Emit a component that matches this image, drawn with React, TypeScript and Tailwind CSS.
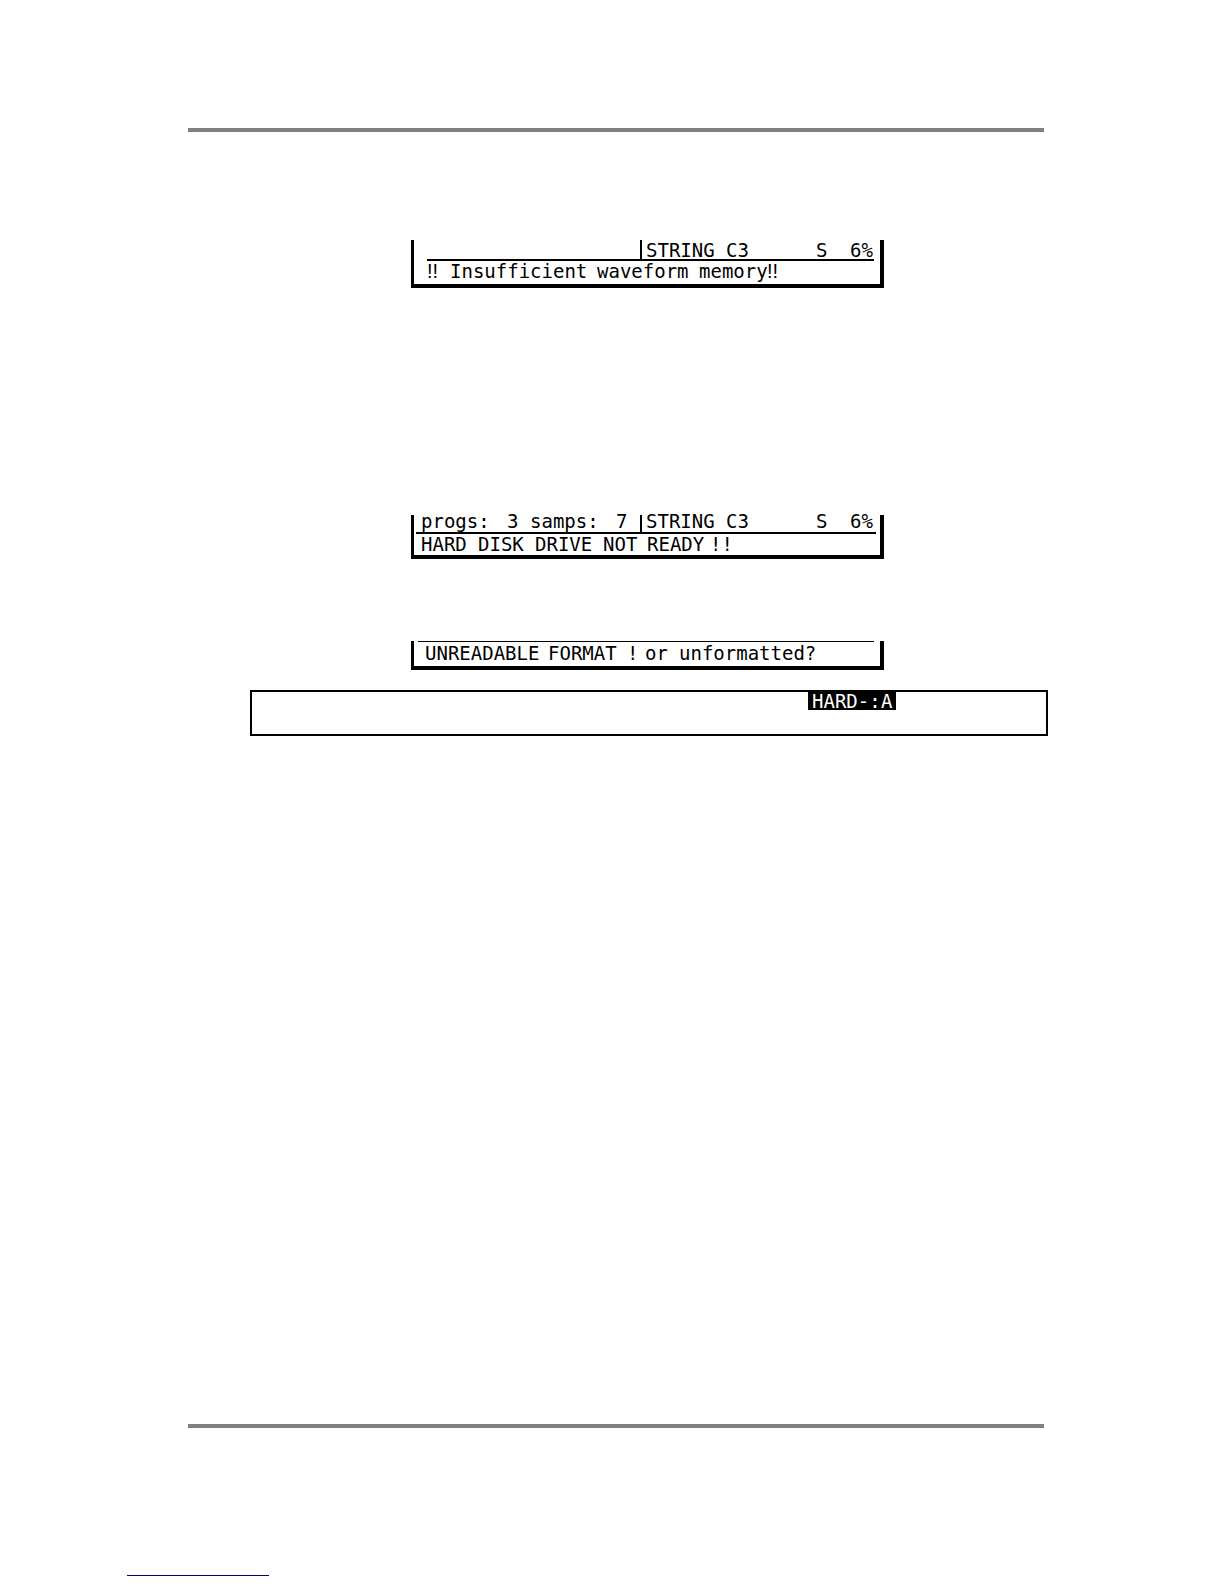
import type { ReactNode } from "react";

const mono = "font-['DejaVu_Sans_Mono',monospace] text-[19px] whitespace-pre";

function Panel({ label, children }: { label: string; children: ReactNode }) {
  return (
    <section
      aria-label={label}
      className={`mx-auto w-[473px] border-b-4 border-l-[3px] border-r-4 border-black ${mono}`}
    >
      {children}
    </section>
  );
}

/* Paired exclamation marks are set tightly on the display. */
function Alert() {
  return <span className="font-['Liberation_Sans',sans-serif] text-[20px]">!!</span>;
}

/* Currently loaded sample and the free memory. */
function SampleStatus() {
  return (
    <div className="flex flex-1 border-l-2 border-black pl-1">
      <span className="w-20">STRING</span>
      <span className="w-[90px]">C3</span>
      <span className="w-[34px]">S</span>
      <span>6%</span>
    </div>
  );
}

export default function App() {
  return (
    <main className="min-h-[1584px] bg-white pl-[188px] pr-[180px] pt-32 text-black">
      <hr className="h-1 border-0 bg-[#808080]" />

      <div className="ml-[63px] pt-[108px]">
        <Panel label="Memory message">
          <div className="flex h-[19px] pl-[226px] leading-5">
            <SampleStatus />
          </div>
          <div className="ml-[13px] mr-[6px] h-0.5 bg-black" />
          <p className="flex h-[23px] pl-[13px] leading-5">
            <span className="w-[23px]"><Alert /></span>
            <span className="w-[147px]">Insufficient</span>
            <span className="w-[102px]">waveform</span>
            <span className="w-[68px]">memory</span>
            <Alert />
          </p>
        </Panel>

        <div className="mt-[227px]">
          <Panel label="Hard disk message">
            <div className="flex h-[17px] pl-[7px] leading-3">
              <span className="w-[86px]">progs:</span>
              <span className="w-[23px]">3</span>
              <span className="w-[86px]">samps:</span>
              <span className="w-6">7</span>
              <SampleStatus />
            </div>
            <div className="ml-0.5 mr-1 h-0.5 bg-black" />
            <p className="flex h-[21px] pl-[7px] leading-5">
              <span className="w-[57px]">HARD</span>
              <span className="w-[57px]">DISK</span>
              <span className="w-[68px]">DRIVE</span>
              <span className="w-[44px]">NOT</span>
              <span className="w-[63px]">READY</span>
              <span>!!</span>
            </p>
          </Panel>
        </div>

        <div className="mt-[82px]">
          <Panel label="Format message">
            <div className="ml-1 mr-[6px] h-px bg-black" />
            <p className="flex h-[24px] pl-[11px] leading-[22px]">
              <span className="w-[123px]">UNREADABLE</span>
              <span className="w-[79px]">FORMAT</span>
              <span className="w-[18px]">!</span>
              <span className="w-[34px]">or</span>
              <span>unformatted?</span>
            </p>
          </Panel>
        </div>

        <div className="-ml-px -mr-1 mt-5 flex h-[46px] items-start justify-end border-2 border-black pr-[150px]">
          <div className={`flex h-[18px] w-[88px] bg-black pl-1 leading-[18px] text-white ${mono}`}>
            <span className="w-[69px]">HARD-:</span>
            <span>A</span>
          </div>
        </div>
      </div>

      <hr className="mt-[688px] h-1 border-0 bg-[#808080]" />
      <div className="-ml-[61px] mt-[147px] h-px w-[142px] bg-[#000080]" />
    </main>
  );
}
